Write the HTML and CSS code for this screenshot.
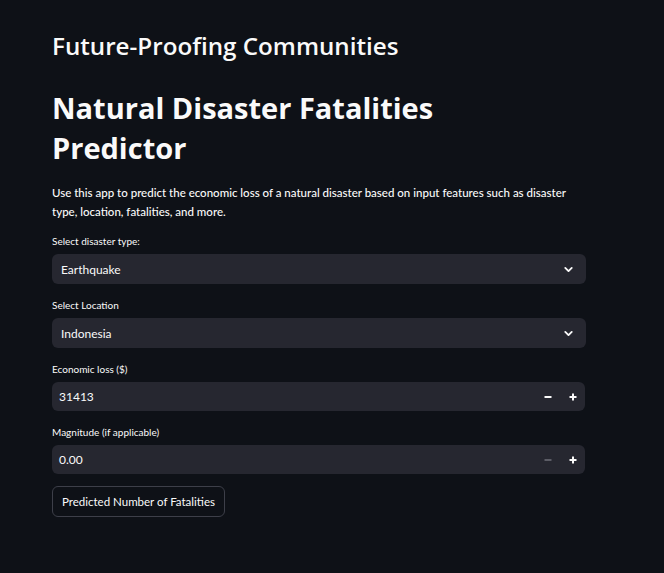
FILE: index.html
```html
<!DOCTYPE html>
<html lang="en">
<head>
<meta charset="utf-8">
<title>Future-Proofing Communities</title>
<link rel="stylesheet" href="styles.css">
</head>
<body>
<main class="app">
  <h2 class="subtitle">Future-Proofing Communities</h2>
  <h1 class="title">Natural Disaster Fatalities Predictor</h1>
  <p class="intro">Use this app to predict the economic loss of a natural disaster based on input features such as disaster type, location, fatalities, and more.</p>

  <div class="field">
    <label class="label">Select disaster type:</label>
    <div class="box select">
      <span class="value">Earthquake</span>
      <svg class="chev" width="13" height="13" viewBox="0 0 24 24"><path d="M6 9l6 6 6-6" fill="none" stroke="#fafafa" stroke-width="3.4" stroke-linecap="round" stroke-linejoin="round"/></svg>
    </div>
  </div>

  <div class="field">
    <label class="label">Select Location</label>
    <div class="box select">
      <span class="value">Indonesia</span>
      <svg class="chev" width="13" height="13" viewBox="0 0 24 24"><path d="M6 9l6 6 6-6" fill="none" stroke="#fafafa" stroke-width="3.4" stroke-linecap="round" stroke-linejoin="round"/></svg>
    </div>
  </div>

  <div class="field">
    <label class="label">Economic loss ($)</label>
    <div class="box number">
      <span class="value num">31413</span>
      <span class="step"><svg width="8" height="8" viewBox="0 0 8 8"><path d="M0.5 4h7" stroke="#fafafa" stroke-width="2"/></svg></span>
      <span class="step"><svg width="8" height="8" viewBox="0 0 8 8"><path d="M0.5 4h7M4 0.5v7" stroke="#fafafa" stroke-width="2"/></svg></span>
    </div>
  </div>

  <div class="field">
    <label class="label">Magnitude (if applicable)</label>
    <div class="box number">
      <span class="value num">0.00</span>
      <span class="step"><svg width="8" height="8" viewBox="0 0 8 8"><path d="M0.5 4h7" stroke="#5c5d66" stroke-width="2"/></svg></span>
      <span class="step"><svg width="8" height="8" viewBox="0 0 8 8"><path d="M0.5 4h7M4 0.5v7" stroke="#fafafa" stroke-width="2"/></svg></span>
    </div>
  </div>

  <div class="actions">
    <button class="btn">Predicted Number of Fatalities</button>
  </div>
</main>
</body>
</html>
```

FILE: styles.css
```css
html, body {
  margin: 0;
  padding: 0;
  background: #0e1117;
  color: #fafafa;
  font-family: "Lato", "Open Sans", sans-serif;
}

.app {
  width: 534px;
  margin-left: 52px;
  padding-top: 30px;
  display: flex;
  flex-direction: column;
}

.subtitle {
  margin: 0;
  font-family: "Open Sans", "Lato", sans-serif;
  font-size: 24.2px;
  font-weight: 600;
  line-height: 32px;
}

.title {
  margin: 26px 0 0;
  max-width: 480px;
  font-family: "Open Sans", "Lato", sans-serif;
  font-size: 29px;
  font-weight: 700;
  line-height: 40px;
}

.intro {
  margin: 15px 0 0;
  font-size: 11.5px;
  line-height: 19px;
  font-weight: 500;
}

.field {
  display: flex;
  flex-direction: column;
  margin-top: 14px;
}

.intro + .field {
  margin-top: 13px;
}

.label {
  font-size: 10px;
  line-height: 14px;
  margin-bottom: 6px;
}

.box {
  display: flex;
  align-items: center;
  background: #262730;
  border-radius: 6px;
  height: 30px;
  box-sizing: border-box;
}

.select {
  padding: 0 11px 0 9px;
}

.chev {
  display: block;
}

.value {
  flex: 1;
  font-size: 12px;
}

.number {
  width: 533px;
  height: 29px;
  padding-left: 7px;
}

.step {
  width: 25px;
  display: flex;
  justify-content: center;
  align-items: center;
}

.step svg {
  display: block;
}

.actions {
  margin-top: 12px;
  display: flex;
}

.btn {
  background: #0e1117;
  color: #fafafa;
  border: 1px solid #3d3f49;
  border-radius: 6px;
  height: 31px;
  padding: 0 9px;
  font-family: inherit;
  font-size: 11.5px;
}
```
